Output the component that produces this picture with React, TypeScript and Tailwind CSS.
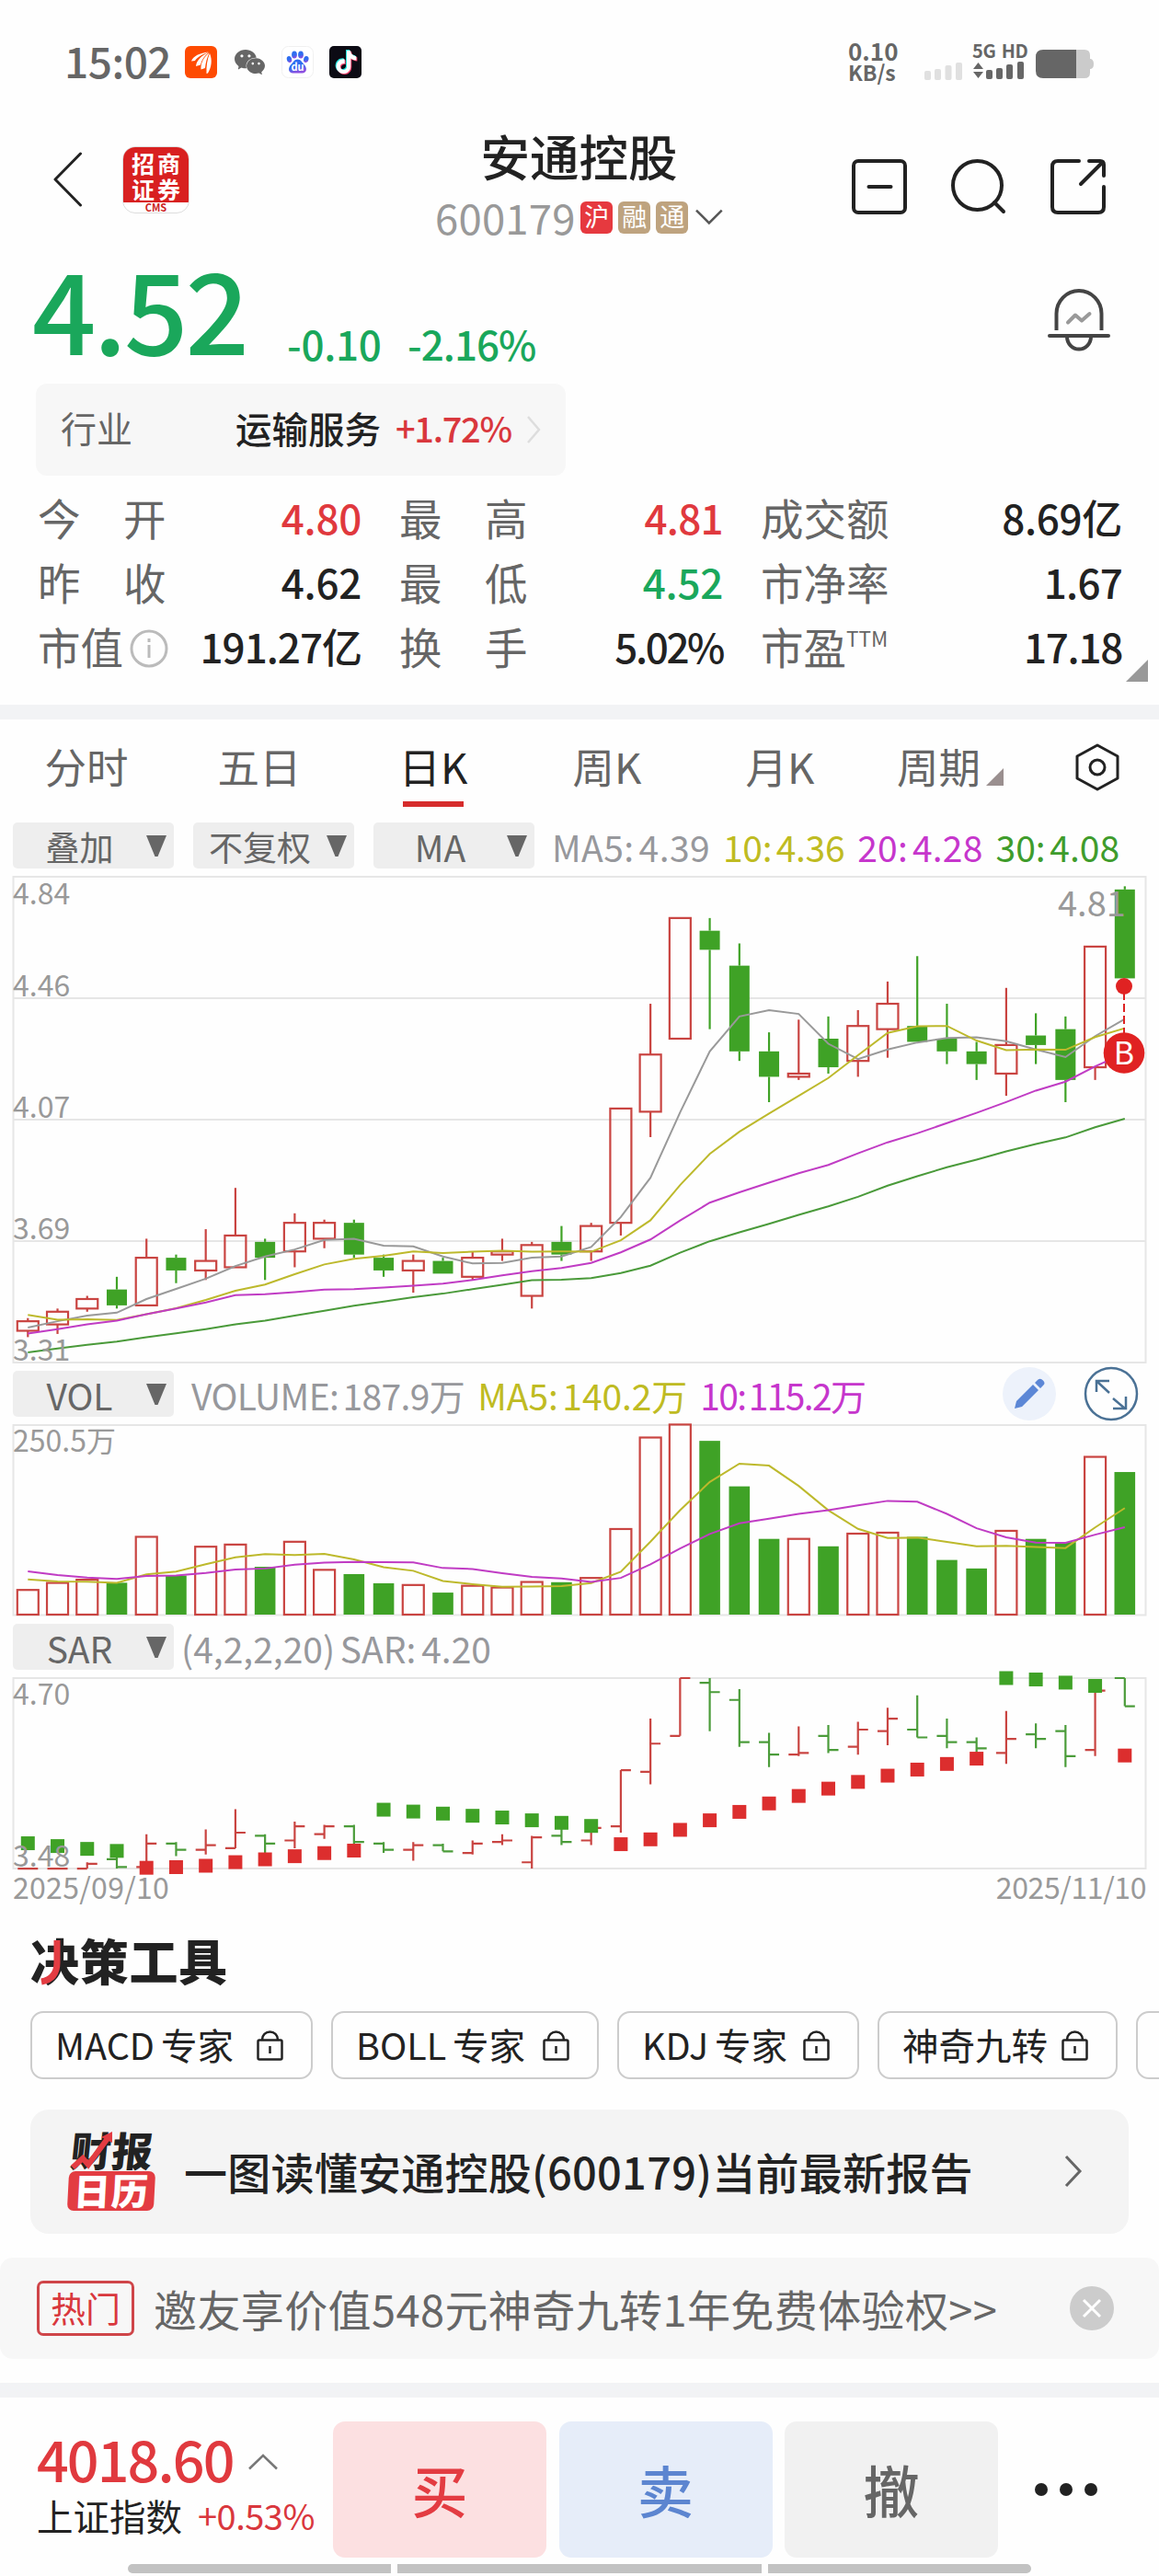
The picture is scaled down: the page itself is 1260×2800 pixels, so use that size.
import { Fragment, type ReactNode } from "react";
import { SiTiktok, SiWechat } from "react-icons/si";

type Candle = [open: number, close: number, high: number, low: number];

const CANDLES: Candle[] = [
  [3.41, 3.44, 3.45, 3.39],
  [3.43, 3.47, 3.48, 3.4],
  [3.48, 3.51, 3.52, 3.47],
  [3.54, 3.49, 3.58, 3.48],
  [3.49, 3.64, 3.7, 3.49],
  [3.64, 3.6, 3.65, 3.56],
  [3.6, 3.63, 3.73, 3.57],
  [3.61, 3.71, 3.86, 3.61],
  [3.69, 3.64, 3.7, 3.57],
  [3.66, 3.75, 3.78, 3.61],
  [3.7, 3.75, 3.76, 3.67],
  [3.75, 3.65, 3.76, 3.64],
  [3.64, 3.6, 3.65, 3.58],
  [3.6, 3.63, 3.65, 3.53],
  [3.63, 3.59, 3.64, 3.59],
  [3.58, 3.64, 3.66, 3.57],
  [3.65, 3.66, 3.7, 3.63],
  [3.52, 3.68, 3.69, 3.48],
  [3.69, 3.65, 3.74, 3.63],
  [3.66, 3.74, 3.75, 3.63],
  [3.75, 4.11, 4.11, 3.71],
  [4.1, 4.28, 4.44, 4.02],
  [4.33, 4.71, 4.71, 4.33],
  [4.67, 4.61, 4.71, 4.36],
  [4.56, 4.29, 4.63, 4.26],
  [4.29, 4.21, 4.35, 4.13],
  [4.21, 4.22, 4.39, 4.2],
  [4.33, 4.24, 4.4, 4.22],
  [4.26, 4.37, 4.42, 4.21],
  [4.36, 4.44, 4.51, 4.27],
  [4.37, 4.32, 4.59, 4.32],
  [4.33, 4.29, 4.44, 4.25],
  [4.29, 4.25, 4.32, 4.2],
  [4.22, 4.31, 4.49, 4.15],
  [4.34, 4.31, 4.41, 4.25],
  [4.36, 4.2, 4.4, 4.13],
  [4.24, 4.62, 4.62, 4.2],
  [4.8, 4.52, 4.81, 4.52],
];

const VOLUMES = [
  32.5, 41.8, 46, 42, 102.5, 51.5, 89.5, 92.3, 63, 96, 59, 53.4, 41.3, 39, 29, 38, 35.7, 43, 42.7,
  48.3, 112.8, 233.4, 250.5, 229, 169, 99.8, 99.8, 90, 106.7, 108, 102.5, 72, 60.8, 110.4, 99.8,
  95.6, 207.9, 187.9,
];

const SAR = [
  3.642, 3.624, 3.606, 3.593, 3.485, 3.489, 3.498, 3.521, 3.539, 3.559, 3.579, 3.595, 3.857, 3.845,
  3.832, 3.818, 3.807, 3.789, 3.773, 3.753, 3.636, 3.667, 3.728, 3.789, 3.843, 3.897, 3.945, 3.992,
  4.035, 4.075, 4.114, 4.15, 4.184, 4.7, 4.691, 4.671, 4.65, 4.204,
];

const MA30 = [
  3.342, 3.354, 3.366, 3.376, 3.39, 3.402, 3.415, 3.43, 3.442, 3.458, 3.473, 3.489, 3.502, 3.516,
  3.527, 3.541, 3.555, 3.569, 3.571, 3.576, 3.592, 3.615, 3.656, 3.692, 3.72, 3.747, 3.775, 3.802,
  3.832, 3.867, 3.897, 3.925, 3.949, 3.975, 3.998, 4.019, 4.051, 4.078,
];

const RED = "#c94441";
const GREEN = "#3fa226";
const GRAY = "#999999";
const YELLOW = "#bdb92c";
const PURPLE = "#c03cc4";

// seed holds the averages that need bars older than the first one
function movingAverage(values: number[], seed: number[]) {
  return values.map((_, i) =>
    i < seed.length ? seed[i] : values.slice(i - 4, i + 1).reduce((a, b) => a + b, 0) / 5,
  );
}

// average over 2n bars from the average over n bars
function doubleAverage(avg: number[], n: number, seed: number[]) {
  return avg.map((v, i) => (i < seed.length ? seed[i] : (v + avg[i - n]) / 2));
}

const closes = CANDLES.map((c) => c[1]);
const ma5 = movingAverage(closes, [3.42, 3.44, 3.458, 3.467]);
const ma10 = doubleAverage(ma5, 5, [3.46, 3.445, 3.446, 3.444, 3.462]);
const ma20 = doubleAverage(
  ma10,
  10,
  [3.401, 3.415, 3.43, 3.442, 3.462, 3.48, 3.499, 3.522, 3.525, 3.532],
);
const vol5 = movingAverage(VOLUMES, [46.4, 43.6, 43.2, 41.8]);
const vol10 = doubleAverage(vol5, 5, [57, 52, 48.7, 46.9, 51]);

const xAt = (i: number) => 30.3 + i * 32.23;
const isUp = (c: Candle) => c[1] >= c[0];

function Line({ data, y, color }: { data: number[]; y: (v: number) => number; color: string }) {
  return (
    <polyline
      points={data.map((v, i) => `${xAt(i)},${y(v)}`).join(" ")}
      fill="none"
      stroke={color}
      strokeWidth={2}
    />
  );
}

function ChartText({ x, y, size = 32, children }: { x: number; y: number; size?: number; children: ReactNode }) {
  return (
    <text x={x} y={y} fontSize={size} fill="#999">
      {children}
    </text>
  );
}

function KLineChart() {
  const y = (p: number) => 9 + (4.84 - p) * 345.1;
  return (
    <svg width={1260} height={546} className="block">
      <rect x={14.5} y={9} width={1231} height={528} fill="none" stroke="#e6e6e6" strokeWidth={2} />
      {[141, 273, 405].map((gy) => (
        <line key={gy} x1={14} x2={1246} y1={gy} y2={gy} stroke="#e6e6e6" strokeWidth={2} />
      ))}
      {CANDLES.map((c, i) => {
        const x = xAt(i);
        const top = y(Math.max(c[0], c[1]));
        const bottom = y(Math.min(c[0], c[1]));
        const color = isUp(c) ? RED : GREEN;
        return (
          <g key={i} stroke={color} strokeWidth={2.2}>
            <line x1={x} x2={x} y1={y(c[2])} y2={top} />
            <line x1={x} x2={x} y1={bottom} y2={y(c[3])} />
            {isUp(c) ? (
              <rect x={x - 11.5} y={top} width={23} height={bottom - top} fill="none" />
            ) : (
              <rect x={x - 11} y={top} width={22} height={bottom - top} fill={GREEN} stroke="none" />
            )}
          </g>
        );
      })}
      <Line data={ma5} y={y} color={GRAY} />
      <Line data={ma10} y={y} color={YELLOW} />
      <Line data={ma20} y={y} color={PURPLE} />
      <Line data={MA30} y={y} color="#4a9a3a" />
      <ChartText x={14} y={39}>4.84</ChartText>
      <ChartText x={14} y={139}>4.46</ChartText>
      <ChartText x={14} y={271}>4.07</ChartText>
      <ChartText x={14} y={403}>3.69</ChartText>
      <ChartText x={14} y={535}>3.31</ChartText>
      <ChartText x={1150} y={52} size={38}>4.81</ChartText>
      {/* buy marker */}
      <line x1={1222} x2={1222} y1={134} y2={180} stroke="#d22" strokeWidth={2} strokeDasharray="9 4" />
      <circle cx={1222} cy={128} r={9} fill="#e02222" />
      <circle cx={1222} cy={200.5} r={22.3} fill="#e02222" />
      <text x={1222} y={213} fontSize={34} fill="#fff" textAnchor="middle">
        B
      </text>
    </svg>
  );
}

function VolumeChart() {
  const y = (v: number) => 215 - v * 0.8247;
  return (
    <svg width={1260} height={225} className="block">
      <rect x={14.5} y={9} width={1231} height={206.5} fill="none" stroke="#e6e6e6" strokeWidth={2} />
      {VOLUMES.map((v, i) => {
        const x = xAt(i);
        return isUp(CANDLES[i]) ? (
          <rect key={i} x={x - 11.5} y={y(v)} width={23} height={215 - y(v)} fill="none" stroke={RED} strokeWidth={2.2} />
        ) : (
          <rect key={i} x={x - 11.3} y={y(v)} width={22.6} height={215 - y(v)} fill={GREEN} />
        );
      })}
      <Line data={vol5} y={y} color={YELLOW} />
      <Line data={vol10} y={y} color={PURPLE} />
      <ChartText x={14} y={38}>250.5万</ChartText>
    </svg>
  );
}

function SarChart() {
  const y = (p: number) => 9 + (4.7 - Math.min(4.7, Math.max(3.48, p))) * 169.7;
  return (
    <svg width={1260} height={221} className="block overflow-visible">
      <rect x={14.5} y={9} width={1231} height={207} fill="none" stroke="#e6e6e6" strokeWidth={2} />
      {CANDLES.map((c, i) => {
        const x = xAt(i);
        const below = SAR[i] < (c[2] + c[3]) / 2;
        return (
          <Fragment key={i}>
            <path
              d={`M${x - 11} ${y(c[0])}H${x}M${x} ${y(c[2])}V${y(c[3])}M${x} ${y(c[1])}H${x + 11}`}
              stroke={isUp(c) ? RED : "#4b9c3a"}
              strokeWidth={2.2}
              fill="none"
            />
            <rect x={x - 7.5} y={y(SAR[i]) - 7.5} width={15} height={15} fill={below ? "#dc2e2e" : GREEN} />
          </Fragment>
        );
      })}
      <ChartText x={14} y={38}>4.70</ChartText>
      <ChartText x={14} y={214}>3.48</ChartText>
    </svg>
  );
}

function Selector({ children, className = "text-[37px]" }: { children: ReactNode; className?: string }) {
  return (
    <div className="flex h-[50px] w-[175px] shrink-0 items-center rounded-[5px] bg-[#eeeeee] pr-2 text-[#666]">
      <span className={`flex-1 pt-[3px] text-center leading-none ${className}`}>{children}</span>
      <svg width={22} height={24} viewBox="0 0 22 24" className="mt-[2px]">
        <path d="M0 0H22L12.5 23H9.5Z" fill="#666" />
      </svg>
    </div>
  );
}

function StatusBar() {
  return (
    <div className="flex h-[132px] items-center pl-[70px] pt-[3px] text-[#666]">
      <span className="-mt-[6px] w-[131px] text-[46px] font-medium leading-none tracking-[-0.5px]">15:02</span>
      <svg width={35} height={35} viewBox="0 0 35 35">
        <rect width={35} height={35} rx={6} fill="#fe4b02" />
        <path
          d="M7 16.500C9 11 16 7.500 26 6.500C19 9 13.500 12 11 16ZM12 22C12.500 16 18 10 26 7C21 11 18 15 17 20.500ZM17.500 25.500C17 18.500 20.500 12 26.500 7.500C24 13 22.500 18 22 24ZM23.500 30C23 22 24.500 14 27 8C30 15 29 23 25 29.500Z"
          fill="#fff"
        />
      </svg>
      <SiWechat size={33} className="ml-[19px]" />
      <svg width={35} height={35} viewBox="0 0 35 35" className="ml-[18px]">
        <defs>
          <linearGradient id="paw" x1="0" y1="0" x2="0.3" y2="1">
            <stop offset="0.6" stopColor="#2f6df0" />
            <stop offset="1" stopColor="#8b4fe0" />
          </linearGradient>
        </defs>
        <rect x={0.5} y={0.5} width={34} height={34} rx={7} fill="#fff" stroke="#f0f0f0" />
        <g fill="url(#paw)">
          <ellipse cx={8.500} cy={14.500} rx={2.700} ry={3.600} transform="rotate(-12 8.500 14.500)" />
          <ellipse cx={14} cy={9.500} rx={2.900} ry={3.900} />
          <ellipse cx={21} cy={9.500} rx={2.900} ry={3.900} />
          <ellipse cx={26.800} cy={14.500} rx={2.700} ry={3.600} transform="rotate(12 26.800 14.500)" />
          <path d="M17.500 14.500C21 14.500 22 17.500 24.500 20C28.500 24 27.500 29.500 22.500 29.500H12.500C7.500 29.500 6.500 24 10.500 20C13 17.500 14 14.500 17.500 14.500Z" />
        </g>
        <text x={17.500} y={27} fontSize={11} fontWeight={700} fill="#fff" textAnchor="middle">
          du
        </text>
      </svg>
      <div className="relative ml-[17px] size-[35px] rounded-[5px] bg-[#0c0b14]">
        <SiTiktok size={25} className="absolute left-[5px] top-[4px] text-[#25e6e0]" />
        <SiTiktok size={25} className="absolute left-[7px] top-[6px] text-[#f5416c]" />
        <SiTiktok size={25} className="absolute left-[6px] top-[5px] text-white" />
      </div>
      <div className="ml-[529px] w-[83px] font-bold">
        <div className="-mt-[3px] text-[26px] leading-[24px]">0.10</div>
        <div className="text-[23px] leading-[23px]">KB/s</div>
      </div>
      <svg width={42} height={40} viewBox="0 0 42 40" fill="#e0e0e0">
        <rect x={0} y={29} width={7} height={10} rx={2} />
        <rect x={11} y={27} width={7} height={12} rx={2} />
        <rect x={22.500} y={23} width={7} height={16} rx={2} />
        <rect x={34} y={20} width={7} height={19} rx={2} />
      </svg>
      <div className="ml-[10px] w-[58px]">
        <div className="-mt-[2px] h-[21px] whitespace-nowrap text-[20px] font-bold leading-[17px] tracking-[-0.3px] [word-spacing:2px]">
          5G HD
        </div>
        <svg width={56} height={20} viewBox="0 0 56 20" fill="#666">
          <path d="M1 8L6.500 1L12 8ZM1 11H12L6.500 18Z" />
          <rect x={15} y={9} width={7} height={10} rx={2} />
          <rect x={26} y={7} width={7} height={12} rx={2} />
          <rect x={37} y={3} width={7} height={16} rx={2} />
          <rect x={49} y={0} width={7} height={19} rx={2} />
        </svg>
      </div>
      <svg width={64} height={32} viewBox="0 0 64 32" className="ml-[11px] mt-1">
        <path d="M40 0H53Q59 0 59 6V10H60Q63 11 63 15.500Q63 20 60 21H59V25Q59 31 53 31H40Z" fill="#cbcbcb" />
        <path d="M8 0H44V31H8Q0 31 0 23V8Q0 0 8 0Z" fill="#666" />
      </svg>
    </div>
  );
}

function Badge({ children, color }: { children: string; color: string }) {
  return (
    <span className={`flex size-[35px] items-center justify-center rounded-[6px] pb-[3px] text-[27px] leading-none text-white ${color}`}>
      {children}
    </span>
  );
}

function Header() {
  return (
    <header className="grid h-[126px] grid-cols-[473px_313px_1fr]">
      <div className="flex items-center pl-[58px]">
        <svg width={32} height={62} viewBox="0 0 32 62" fill="none" stroke="#222" strokeWidth={3} strokeLinecap="round" strokeLinejoin="round">
          <path d="M29.500 3L2 31L29.500 59" />
        </svg>
        <div className="ml-[43px] flex h-[73px] w-[73px] flex-col overflow-hidden rounded-[14px] border border-[#ddd] bg-white">
          <div className="grid h-[60px] shrink-0 grid-cols-2 bg-[#d82020] px-[9px] pt-[4px] text-[25px] font-bold leading-[26px] text-white">
            <span>招</span>
            <span className="text-right">商</span>
            <span>证</span>
            <span className="text-right">券</span>
          </div>
          <div className="text-center text-[11px] font-bold leading-[10px] text-[#c22]">CMS</div>
        </div>
      </div>
      <div className="flex flex-col items-center pt-[10px]">
        <h1 className="text-[53.500px] font-medium leading-[53px] text-[#222]">安通控股</h1>
        <div className="mt-[23px] flex h-9 w-full items-center">
          <span className="w-[160px] pb-[1px] text-[45.500px] leading-none tracking-[0.2px] text-[#999]">600179</span>
          <div className="flex gap-[6px]">
            <Badge color="bg-[#e6393f]">沪</Badge>
            <Badge color="bg-[#bea37f]">融</Badge>
            <Badge color="bg-[#bea37f]">通</Badge>
          </div>
          <svg width={30} height={18} viewBox="0 0 30 18" fill="none" stroke="#555" strokeWidth={2.5} className="ml-2">
            <path d="M1 1.500L15 15.500L29 1.500" />
          </svg>
        </div>
      </div>
      <div className="flex items-center pl-[140px] pt-4">
        <svg width={60} height={60} viewBox="0 0 60 60" fill="none" stroke="#222" strokeWidth={4} strokeLinecap="round">
          <rect x={2} y={2} width={56} height={56} rx={5} />
          <path d="M18.500 30H42.500" />
        </svg>
        <svg width={60} height={60} viewBox="0 0 60 60" className="ml-[48px]" fill="none" stroke="#222" strokeWidth={4} strokeLinecap="round">
          <circle cx={28.500} cy={28.500} r={26.500} />
          <path d="M47 47L57 57" />
        </svg>
        <svg width={60} height={60} viewBox="0 0 60 60" className="ml-[48px]" fill="none" stroke="#222" strokeWidth={4} strokeLinecap="round" strokeLinejoin="round">
          <path d="M31 2H8Q2 2 2 8V52Q2 58 8 58H52Q58 58 58 52V30" />
          <path d="M42 2H54Q58 2 58 6V18M56 4L33 27" />
        </svg>
      </div>
    </header>
  );
}

function PriceRow() {
  return (
    <div className="flex h-[159px] items-start text-[#1aa75b]">
      <span className="mt-[14px] w-[278px] pl-[35px] text-[122px] font-medium leading-none tracking-[-3px]">4.52</span>
      <span className="mt-[93px] w-[132px] pl-[34px] text-[44px] font-medium leading-none tracking-[-0.3px]">-0.10</span>
      <span className="mt-[93px] pl-[33px] text-[44px] font-medium leading-none tracking-[-1px]">-2.16%</span>
      <svg width={68} height={69} viewBox="0 0 68 69" className="ml-auto mr-[53px] mt-[56px]" fill="none" stroke="#444" strokeWidth={4}>
        <path d="M9.500 45V27A24.500 25 0 0 1 58.500 27V45" />
        <path d="M2 51H66" strokeLinecap="round" />
        <path d="M21 52A13 13.500 0 0 0 47 52" />
        <path d="M22 36.500L30 28.500L37 34.500L45.500 27" stroke="#999" strokeLinecap="round" strokeLinejoin="round" />
      </svg>
    </div>
  );
}

function Industry() {
  return (
    <div className="ml-[39px] flex h-[100px] w-[576px] items-center rounded-[12px] bg-[#f7f7f7] pb-[5px] pl-[27px] leading-none">
      <span className="w-[190px] text-[39px] text-[#666]">行业</span>
      <span className="w-[174px] text-[39.500px] font-medium text-[#222]">运输服务</span>
      <span className="w-[127px] text-[38px] font-medium tracking-[-1.300px] text-[#d9373d]">+1.72%</span>
      <svg width={17} height={32} viewBox="0 0 17 32" className="ml-[15px] mt-1" fill="none" stroke="#ddd" strokeWidth={2.5}>
        <path d="M2 2L14 16L2 30" />
      </svg>
    </div>
  );
}

const STATS = [
  { label: "今　开", value: "4.80", color: "text-[#e0393e] tracking-[-0.3px]" },
  { label: "最　高", value: "4.81", color: "text-[#e0393e] tracking-[-0.7px]" },
  { label: "成交额", value: "8.69亿", color: "text-[#222] tracking-[-0.3px]" },
  { label: "昨　收", value: "4.62", color: "text-[#222] tracking-[-0.3px]" },
  { label: "最　低", value: "4.52", color: "text-[#1aa75b] tracking-[-0.3px]" },
  { label: "市净率", value: "1.67", color: "text-[#222] tracking-[-0.8px]" },
  { label: "市值", info: true, value: "191.27亿", color: "text-[#222] tracking-[-1px]" },
  { label: "换　手", value: "5.02%", color: "text-[#222] tracking-[-2.400px]" },
  { label: "市盈", sup: "TTM", value: "17.18", color: "text-[#222] tracking-[-1.300px]" },
];

function Stats() {
  return (
    <div className="relative h-[249px] pl-[41px] pt-[13px]">
      <div className="grid w-[1179px] auto-rows-[70px] grid-cols-[352px_352px_393px] gap-x-[41px]">
        {STATS.map((s) => (
          <div key={s.label} className="flex items-center whitespace-nowrap pb-[6px] leading-none">
            <span className="text-[46.500px] text-[#666]">{s.label}</span>
            {s.info && (
              <svg width={42} height={42} viewBox="0 0 42 42" className="ml-[7px] mt-[6px]" fill="none" stroke="#bbb" strokeWidth={3}>
                <circle cx={21} cy={21} r={19} />
                <path d="M21 17V31M21 10V14" />
              </svg>
            )}
            {s.sup && <span className="-mt-[17px] text-[22.500px] text-[#666]">{s.sup}</span>}
            <span className={`ml-auto text-[44px] font-medium ${s.color}`}>{s.value}</span>
          </div>
        ))}
      </div>
      <svg width={24} height={24} className="absolute bottom-[25px] right-[12px]">
        <path d="M24 0V24H0Z" fill="#999" />
      </svg>
    </div>
  );
}

const TABS = ["分时", "五日", "日K", "周K", "月K", "周期"];

function Tabs() {
  return (
    <nav className="grid h-[112px] grid-cols-[188px_188px_190px_188px_188px_182px_1fr] justify-items-center pt-[28px] text-[45.500px] leading-none text-[#666]">
      {TABS.map((tab) => (
        <div key={tab} className="flex flex-col items-center">
          <div className={tab === "日K" ? "flex items-end text-[#222]" : "flex items-end"}>
            {tab}
            {tab === "周期" && (
              <svg width={19} height={19} className="mb-[2px] ml-[6px]">
                <path d="M19 0V19H0Z" fill="#9a8f8f" />
              </svg>
            )}
          </div>
          {tab === "日K" && <div className="mt-[15px] h-[6px] w-[66px] bg-[#d62c2c]" />}
        </div>
      ))}
      <svg width={50} height={52} viewBox="0 0 50 52" fill="none" stroke="#222" strokeWidth={3} strokeLinejoin="round" className="-mt-[2px] ml-[2px]">
        <path d="M25 2L47 14V38L25 50L3 38V14Z" />
        <circle cx={25} cy={26} r={8} />
      </svg>
    </nav>
  );
}

function LockIcon() {
  return (
    <svg width={29} height={33} viewBox="0 0 29 33" fill="none" stroke="#222" strokeWidth={2.5}>
      <rect x={1.500} y={10.500} width={26} height={21} rx={1.500} />
      <path d="M6 10A8.500 8.500 0 0 1 23 10M14.500 17V25" />
    </svg>
  );
}

const TOOLS = [
  { name: "MACD 专家", width: "w-[307px]" },
  { name: "BOLL 专家", width: "w-[291px]" },
  { name: "KDJ 专家", width: "w-[263px]" },
  { name: "神奇九转", width: "w-[261px]" },
];

function Tools() {
  return (
    <section>
      <h2 className="relative ml-[33px] mt-[34px] text-[53px] font-black leading-none tracking-[0.7px] text-[#222]">
        决策工具
        <svg width={34} height={52} viewBox="0 0 34 52" className="absolute left-[11px] top-[4px]" fill="none" stroke="#e33c42" strokeWidth={7}>
          <path d="M18 1V25Q18 43 1 46" />
        </svg>
      </h2>
      <div className="mt-[29px] flex gap-5 overflow-hidden pl-[33px]">
        {TOOLS.map((t) => (
          <div key={t.name} className={`flex h-[74px] shrink-0 items-center justify-between rounded-[14px] border-2 border-[#ccc] pl-[25px] pr-[30px] ${t.width}`}>
            <span className="whitespace-nowrap pb-[3px] text-[39.500px] leading-none text-[#222] [word-spacing:-2px]">{t.name}</span>
            <LockIcon />
          </div>
        ))}
        <div className="h-[74px] w-[200px] shrink-0 rounded-[14px] border-2 border-[#ccc]" />
      </div>
    </section>
  );
}

function ReportCard() {
  return (
    <div className="mx-[33px] mt-[33px] flex h-[135px] items-center rounded-[20px] bg-[#f4f4f4] pl-[41px] pr-[50px]">
      <div className="relative w-[94px]">
        <div className="ml-[3px] h-[42px] -skew-x-6 whitespace-nowrap text-[44px] font-black leading-[36px] tracking-[1px] text-[#222]">财报</div>
        <svg width={48} height={42} viewBox="0 0 48 42" className="absolute left-[2px] top-[-1px]" fill="none" stroke="#e33c42" strokeWidth={6}>
          <path d="M3 39L14 29L20 36L42 6" />
          <path d="M34 6L46 0L46 12Z" fill="#e33c42" stroke="none" />
        </svg>
        <div className="flex h-[43px] -skew-x-3 items-center justify-center rounded-[7px] bg-[#e33c42] pb-[4px] text-[40px] font-black leading-none tracking-[1px] text-white">
          日历
        </div>
      </div>
      <span className="ml-[32px] whitespace-nowrap pb-[3px] text-[47px] font-medium leading-none tracking-[0.25px] text-[#222]">
        一图读懂安通控股(600179)当前最新报告
      </span>
      <svg width={20} height={36} viewBox="0 0 20 36" className="-mt-[2px] ml-auto" fill="none" stroke="#666" strokeWidth={3}>
        <path d="M2 2L17 18L2 34" />
      </svg>
    </div>
  );
}

function Promo() {
  return (
    <div className="mt-[26px] flex h-[110px] items-center rounded-[14px] bg-[#f7f7f7] pl-10 pr-[49px]">
      <span className="flex h-[60px] w-[106px] items-center justify-center rounded-[7px] border-[3px] border-[#cf4549] pb-[2px] text-[38px] leading-none text-[#d9373d]">
        热门
      </span>
      <span className="ml-[21px] whitespace-nowrap pb-[1px] text-[47px] leading-none tracking-[0.400px] text-[#666]">
        邀友享价值548元神奇九转1年免费体验权&gt;&gt;
      </span>
      <svg width={48} height={48} viewBox="0 0 48 48" className="ml-auto">
        <circle cx={24} cy={24} r={24} fill="#ccc" />
        <path d="M15 15L33 33M33 15L15 33" stroke="#fff" strokeWidth={3} />
      </svg>
    </div>
  );
}

function TradeButton({ children, className }: { children: string; className: string }) {
  return (
    <button className={`h-[148px] w-[232px] rounded-[13px] pb-[2px] text-[61px] font-medium leading-none ${className}`}>
      {children}
    </button>
  );
}

function BottomBar() {
  return (
    <footer className="flex h-[181px] items-start pl-[40px] pt-[26px]">
      <div className="w-[322px] pt-[9px]">
        <div className="flex items-center text-[#e0393e]">
          <span className="w-[216px] text-[61px] font-medium leading-none tracking-[-1.900px]">4018.60</span>
          <svg width={32} height={18} viewBox="0 0 32 18" className="ml-[14px] mt-2" fill="none" stroke="#777" strokeWidth={2.5}>
            <path d="M1 16.500L16 2L31 16.500" />
          </svg>
        </div>
        <div className="mt-[12px] flex items-center whitespace-nowrap leading-none">
          <span className="w-[175px] text-[39.500px] text-[#222]">上证指数</span>
          <span className="text-[38px] tracking-[-0.5px] text-[#d9373d]">+0.53%</span>
        </div>
      </div>
      <div className="flex gap-[13.500px]">
        <TradeButton className="bg-[#fce0e1] text-[#e33c42]">买</TradeButton>
        <TradeButton className="bg-[#e6edf9] text-[#5c85d0]">卖</TradeButton>
        <TradeButton className="bg-[#f1f1f1] text-[#666]">撤</TradeButton>
      </div>
      <div className="ml-[40px] mt-[67px] flex gap-[13px]">
        <i className="size-[14px] rounded-full bg-[#222]" />
        <i className="size-[14px] rounded-full bg-[#222]" />
        <i className="size-[14px] rounded-full bg-[#222]" />
      </div>
    </footer>
  );
}

export default function App() {
  return (
    <div className="flex h-[2800px] w-[1260px] flex-col overflow-hidden bg-[#fefefe] font-['Noto_Sans_CJK_SC',sans-serif]">
      <StatusBar />
      <Header />
      <PriceRow />
      <Industry />
      <Stats />
      <div className="h-4 shrink-0 bg-[#f2f3f5]" />
      <Tabs />

      <div className="flex gap-[21px] pl-[14px]">
        <Selector>叠加</Selector>
        <Selector>不复权</Selector>
        <Selector className="text-[39px]">MA</Selector>
        <div className="-ml-[2px] flex items-center gap-[14px] whitespace-nowrap pt-[3px] text-[39px] leading-none [word-spacing:-4px]">
          <span className="tracking-[0.4px] text-[#97989c]">MA5: 4.39</span>
          <span className="tracking-[-0.3px] text-[#bfbb22]">10: 4.36</span>
          <span className="tracking-[0.2px] text-[#c636cc]">20: 4.28</span>
          <span className="text-[#3f9c2c]">30: 4.08</span>
        </div>
      </div>
      <KLineChart />

      <div className="flex h-[50px] shrink-0 items-center pl-[14px]">
        <Selector className="text-[39px]">VOL</Selector>
        <div className="ml-[19px] flex gap-[14px] whitespace-nowrap pt-[2px] text-[39px] leading-none [word-spacing:-4px]">
          <span className="tracking-[-0.600px] text-[#97989c]">VOLUME: 187.9万</span>
          <span className="tracking-[-0.1px] text-[#bfbb22]">MA5: 140.2万</span>
          <span className="tracking-[-1.600px] text-[#c636cc]">10: 115.2万</span>
        </div>
        <div className="ml-auto mr-[22px] flex gap-[29px]">
          <svg width={60} height={60} viewBox="0 0 60 60">
            <circle cx={30} cy={30} r={29} fill="#edf2fb" />
            <path d="M14 46L16 38L34 20L40 26L22 44ZM36 18L39 15Q42 12.500 45 15.500Q48 18.500 45 21L42 24Z" fill="#5c87d6" />
          </svg>
          <svg width={60} height={60} viewBox="0 0 60 60" fill="none" stroke="#4a7195" strokeWidth={2.5}>
            <circle cx={30} cy={30} r={28} />
            <path d="M14 28V16H28M14 16L28 29M32 35L45 46M46 33V46H32" />
          </svg>
        </div>
      </div>
      <VolumeChart />

      <div className="flex items-center pl-[14px]">
        <Selector className="text-[39px]">SAR</Selector>
        <span className="ml-[8px] pt-[2px] text-[39px] leading-none text-[#97989c] [word-spacing:-3px]">(4,2,2,20) SAR: 4.20</span>
      </div>
      <SarChart />
      <div className="flex h-[34px] justify-between pl-[14px] pr-[14px] text-[32px] leading-[28px] text-[#999]">
        <span className="tracking-[0.3px]">2025/09/10</span>
        <span className="tracking-[-0.4px]">2025/11/10</span>
      </div>

      <Tools />
      <ReportCard />
      <Promo />
      <div className="mt-[26px] h-4 shrink-0 bg-[#f2f3f5]" />
      <BottomBar />
      <div className="flex gap-[7px] pl-[139px]">
        <div className="h-[10px] w-[286px] rounded-l-full bg-[#c2c2c2]" />
        <div className="h-[10px] w-[396px] bg-[#c2c2c2]" />
        <div className="h-[10px] w-[286px] rounded-r-full bg-[#c2c2c2]" />
      </div>
    </div>
  );
}
